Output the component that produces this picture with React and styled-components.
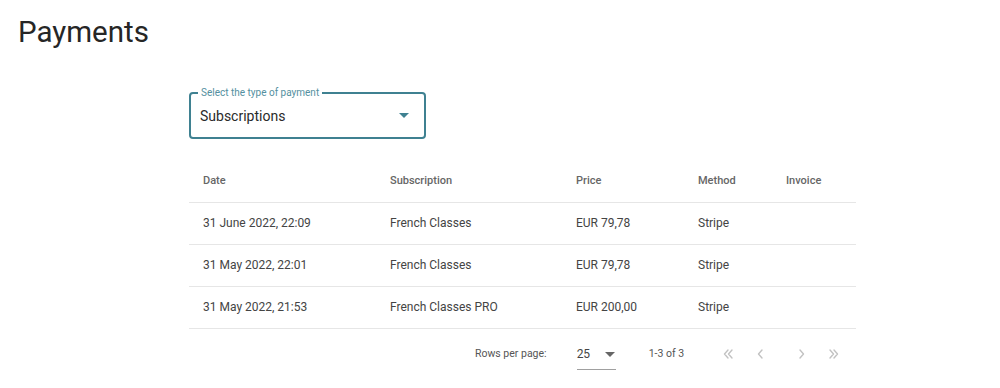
import styled, { createGlobalStyle } from "styled-components";

const GlobalStyle = createGlobalStyle`
  body {
    margin: 0;
    background: #fff;
    font-family: Roboto, "Liberation Sans", Arial, sans-serif;
    color: rgba(0, 0, 0, 0.87);
  }
`;

const Page = styled.div`
  width: 1000px;
  height: 388px;
  box-sizing: border-box;
  padding: 14px 18px 0;
  overflow: hidden;
  white-space: nowrap;
`;

const Title = styled.h1`
  margin: 0;
  font-size: 29.5px;
  font-weight: 400;
  line-height: 36px;
  color: #262626;
`;

const Content = styled.div`
  width: 667px;
  margin: 42px 0 0 171px;
`;

const Field = styled.fieldset`
  position: relative;
  width: 237px;
  height: 47px;
  box-sizing: border-box;
  margin: 0;
  padding: 0 10px 0 9px;
  border: 2px solid #3f8191;
  border-radius: 4px;
  display: flex;
  align-items: center;
  justify-content: space-between;
`;

const Legend = styled.legend`
  position: absolute;
  top: -7px;
  left: 7px;
  padding: 0 3px;
  background: #fff;
  font-size: 10px;
  line-height: 12px;
  color: #5490a0;
`;

const Value = styled.span`
  font-size: 14px;
  color: #2a2a2a;
`;

const Caret = styled.span`
  width: 0;
  height: 0;
  margin-right: 5px;
  border-left: 5px solid transparent;
  border-right: 5px solid transparent;
  border-top: 5px solid ${(p) => p.color || "#3f8191"};
`;

const Table = styled.table`
  width: 667px;
  margin-top: 21px;
  border-collapse: collapse;
  table-layout: fixed;
`;

const Th = styled.th`
  width: ${(p) => p.w}px;
  height: 42px;
  box-sizing: border-box;
  padding: 0 14px;
  text-align: left;
  font-size: 11px;
  font-weight: 500;
  color: #666;
  border-bottom: 1px solid #e6e6e6;
`;

const Td = styled.td`
  height: 42px;
  box-sizing: border-box;
  padding: 0 14px;
  font-size: 12px;
  color: #444;
  border-bottom: 1px solid #e6e6e6;
`;

const Pager = styled.div`
  display: flex;
  align-items: center;
  height: 50px;
  padding-left: 286px;
  font-size: 10.5px;
  color: #555;
`;

const PerPage = styled.div`
  display: flex;
  align-items: center;
  gap: 15px;
  width: 26px;
  height: 22px;
  margin-left: 30px;
  margin-top: 6px;
  padding: 0 13px 4px 0;
  border-bottom: 1px solid #a0a0a0;
  font-size: 12px;
  color: #444;
`;

const Range = styled.span`
  margin-left: 33px;
  font-size: 10.5px;
  color: #555;
`;

const Nav = styled.div`
  display: flex;
  align-items: center;
  gap: 16px;
  margin-left: 36px;
`;

const NavButton = styled.span`
  display: flex;
  width: 16px;
  height: 16px;
  margin-right: ${(p) => p.gap || 0}px;
`;

const Chevron = ({ d }) => (
  <svg width="16" height="16" viewBox="0 0 16 16" fill="none" stroke="#c2c2c2" strokeWidth="1.4" strokeLinecap="round" strokeLinejoin="round">
    <path d={d} />
  </svg>
);

const columns = [
  ["Date", 187],
  ["Subscription", 186],
  ["Price", 122],
  ["Method", 88],
  ["Invoice", 84],
];

const rows = [
  ["31 June 2022, 22:09", "French Classes", "EUR 79,78", "Stripe", ""],
  ["31 May 2022, 22:01", "French Classes", "EUR 79,78", "Stripe", ""],
  ["31 May 2022, 21:53", "French Classes PRO", "EUR 200,00", "Stripe", ""],
];

export default function App() {
  return (
    <Page>
      <GlobalStyle />
      <Title>Payments</Title>
      <Content>
        <Field>
          <Legend>Select the type of payment</Legend>
          <Value>Subscriptions</Value>
          <Caret />
        </Field>
        <Table>
          <thead>
            <tr>
              {columns.map(([name, w]) => (
                <Th key={name} w={w}>{name}</Th>
              ))}
            </tr>
          </thead>
          <tbody>
            {rows.map((r, i) => (
              <tr key={i}>
                {r.map((c, j) => (
                  <Td key={j}>{c}</Td>
                ))}
              </tr>
            ))}
          </tbody>
        </Table>
        <Pager>
          <span>Rows per page:</span>
          <PerPage>
            25
            <Caret color="#666" />
          </PerPage>
          <Range>1-3 of 3</Range>
          <Nav>
            <NavButton><Chevron d="M8 4 4.5 8 8 12M12 4 8.5 8 12 12" /></NavButton>
            <NavButton gap={10}><Chevron d="M10 4 6.5 8 10 12" /></NavButton>
            <NavButton><Chevron d="M6 4 9.5 8 6 12" /></NavButton>
            <NavButton><Chevron d="M4 4 7.5 8 4 12M8 4 11.5 8 8 12" /></NavButton>
          </Nav>
        </Pager>
      </Content>
    </Page>
  );
}
